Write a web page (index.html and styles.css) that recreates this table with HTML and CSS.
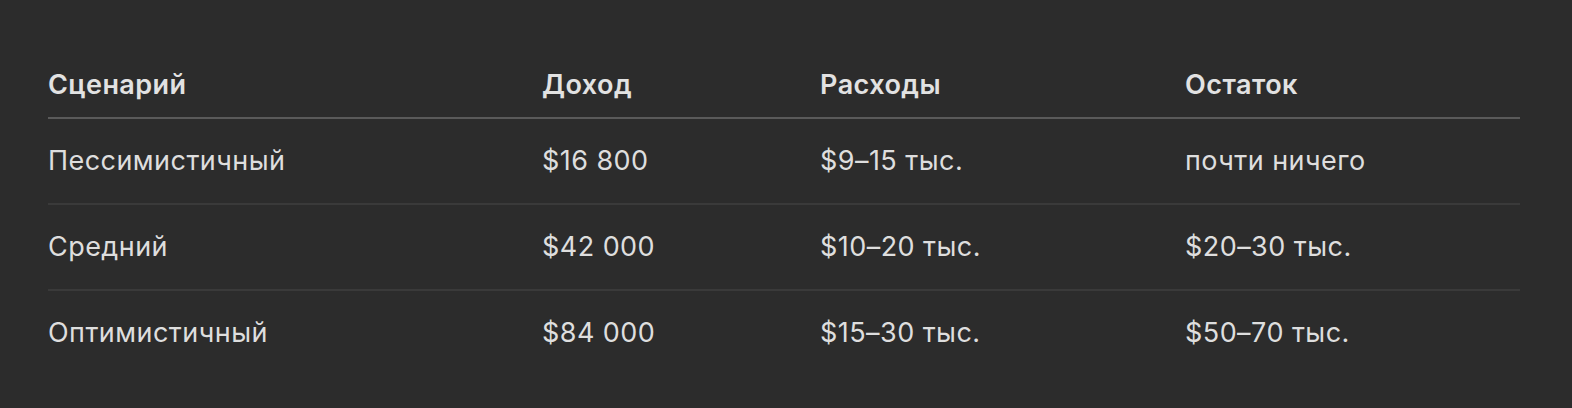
FILE: index.html
```html
<!DOCTYPE html>
<html lang="ru">
<head>
<meta charset="utf-8">
<link rel="stylesheet" href="styles.css">
</head>
<body>
<div class="page">
  <table class="scenarios">
    <colgroup>
      <col class="c1"><col class="c2"><col class="c3"><col class="c4">
    </colgroup>
    <thead>
      <tr><th>Сценарий</th><th>Доход</th><th>Расходы</th><th>Остаток</th></tr>
    </thead>
    <tbody>
      <tr><td>Пессимистичный</td><td>$16 800</td><td>$9–15 тыс.</td><td>почти ничего</td></tr>
      <tr><td>Средний</td><td>$42 000</td><td>$10–20 тыс.</td><td>$20–30 тыс.</td></tr>
      <tr><td>Оптимистичный</td><td>$84 000</td><td>$15–30 тыс.</td><td>$50–70 тыс.</td></tr>
    </tbody>
  </table>
</div>
</body>
</html>
```
FILE: styles.css
```css
html, body {
  margin: 0;
  padding: 0;
  background: #2c2c2c;
}
body {
  font-family: Inter, "Noto Sans", "Liberation Sans", sans-serif;
  color: #dedede;
  width: 1572px;
  height: 408px;
  overflow: hidden;
}
.page {
  padding: 54px 0 0 48px;
}
.scenarios {
  width: 1472px;
  border-collapse: collapse;
  table-layout: fixed;
  font-size: 27px;
  line-height: 40px;
  letter-spacing: 0.45px;
}
.c1 { width: 494px; }
.c2 { width: 278px; }
.c3 { width: 365px; }
.c4 { width: 335px; }
.scenarios th {
  text-align: left;
  font-weight: 600;
  color: #e2e2e2;
  padding: 11px 0 12px 0;
  border-bottom: 2px solid #5a5a5a;
}
.scenarios td {
  padding: 22px 0;
  border-bottom: 2px solid #3a3a3a;
  font-weight: 400;
}
.scenarios tbody tr:last-child td {
  border-bottom: none;
}
```
